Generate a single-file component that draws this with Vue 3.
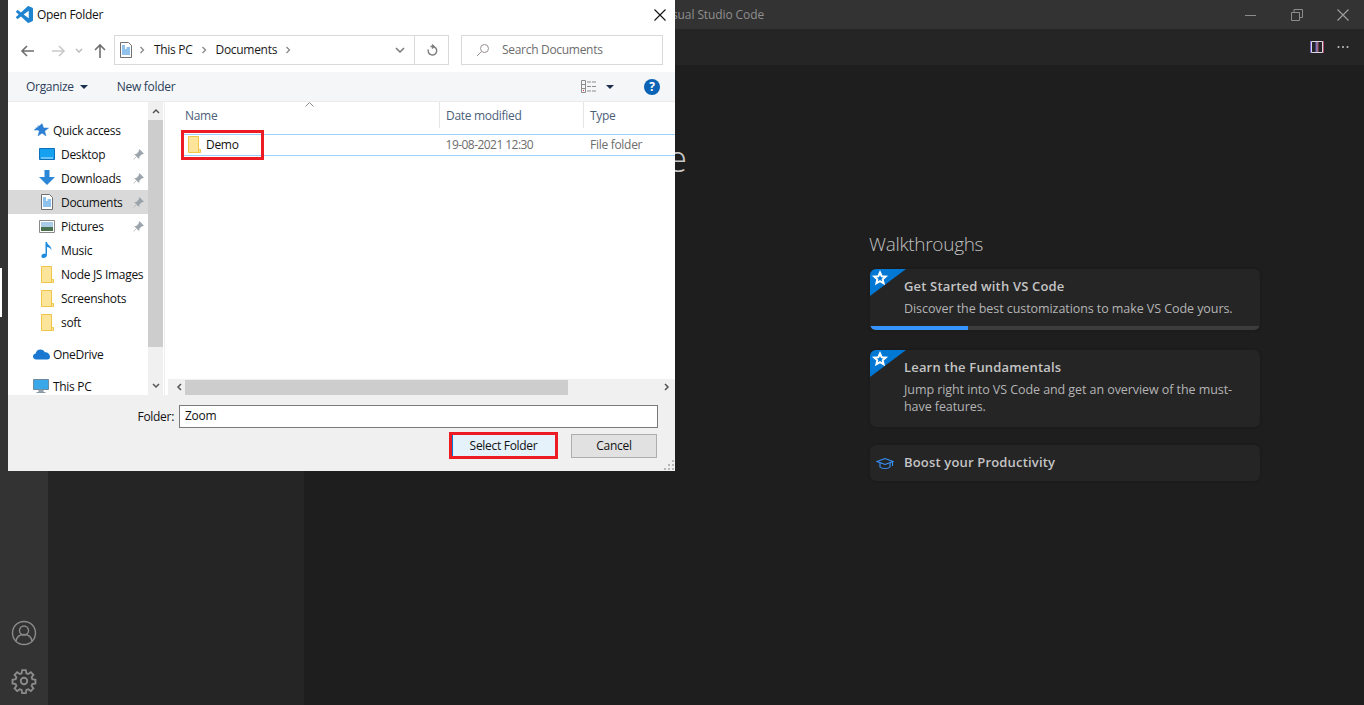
<script setup>
const places = [
  { label: 'Quick access', icon: 'quick', top: true, gap: 0 },
  { label: 'Desktop', icon: 'desktop', pin: true },
  { label: 'Downloads', icon: 'download', pin: true },
  { label: 'Documents', icon: 'doc', pin: true, selected: true },
  { label: 'Pictures', icon: 'picture', pin: true },
  { label: 'Music', icon: 'music' },
  { label: 'Node JS Images', icon: 'folder' },
  { label: 'Screenshots', icon: 'folder' },
  { label: 'soft', icon: 'folder' },
  { label: 'OneDrive', icon: 'cloud', top: true, spaced: true },
  { label: 'This PC', icon: 'pc', top: true, spaced: true },
]
const walkthroughs = [
  { title: 'Get Started with VS Code', desc: 'Discover the best customizations to make VS Code yours.', star: true, progress: 25 },
  { title: 'Learn the Fundamentals', desc: 'Jump right into VS Code and get an overview of the must-have features.', star: true },
  { title: 'Boost your Productivity', cap: true },
]
</script>

<template>
  <div class="app">
    <header class="titlebar">
      <span class="title-text">Visual Studio Code</span>
      <div class="win-controls">
        <svg width="12" height="12" viewBox="0 0 12 12"><path d="M0 6.5h11" stroke="#8c8c8c" fill="none"/></svg>
        <svg width="12" height="12" viewBox="0 0 12 12"><path d="M.5 3.5h8v8h-8zM3 3V.5h8.500v8H9" stroke="#8c8c8c" fill="none"/></svg>
        <svg width="12" height="12" viewBox="0 0 12 12"><path d="M.5.500l11 11M11.500.500l-11 11" stroke="#9c9c9c" stroke-width="1.200" fill="none"/></svg>
      </div>
    </header>
    <div class="main">
      <aside class="activity">
        <div class="activity-active"></div>
        <div class="activity-bottom">
          <svg width="26" height="26" viewBox="0 0 26 26" fill="none" stroke="#8b8b8b" stroke-width="1.400">
            <circle cx="13" cy="13" r="11.500"/>
            <circle cx="13" cy="10.500" r="4.500"/>
            <path d="M5 21c1-5 4-6.500 8-6.500s7 1.500 8 6.500"/>
          </svg>
          <svg width="26" height="26" viewBox="0 0 24 24" fill="none" stroke="#8b8b8b" stroke-width="1.700">
            <path d="M10.300 2h3.400l.5 2.900 1.700.7 2.400-1.700 2.400 2.400-1.700 2.400.7 1.700 2.900.5v3.400l-2.900.5-.7 1.700 1.700 2.400-2.400 2.400-2.400-1.700-1.700.7-.5 2.900h-3.400l-.5-2.900-1.700-.7-2.400 1.700-2.400-2.400 1.700-2.400-.7-1.700-2.900-.5v-3.400l2.900-.5.7-1.700-1.700-2.400 2.400-2.400 2.400 1.700 1.700-.7z"/>
            <circle cx="12" cy="12" r="3"/>
          </svg>
        </div>
      </aside>
      <aside class="sidebar"></aside>
      <main class="editor">
        <div class="tabs">
          <svg width="14" height="14" viewBox="0 0 14 14" fill="none">
            <path d="M1.500 1.500h11v11h-11zM7 1.500v11" stroke="#dcd6e6"/>
            <path d="M.5 1v12M6 2v10" stroke="#7a6cf0" stroke-width=".8"/>
            <path d="M13.500 1v12M8 2v10" stroke="#d0507a" stroke-width=".8"/>
          </svg>
          <svg width="14" height="14" viewBox="0 0 14 14" fill="#c5c5c5"><circle cx="2.500" cy="7" r="1"/><circle cx="7" cy="7" r="1"/><circle cx="11.500" cy="7" r="1"/></svg>
        </div>
        <div class="welcome">
          <div class="welcome-left">
            <h1 class="product">Visual Studio Code</h1>
          </div>
          <section class="welcome-right">
            <h2 class="walk-heading">Walkthroughs</h2>
            <article v-for="w in walkthroughs" :key="w.title" class="walk-card" :class="{ 'has-progress': w.progress, 'is-cap': w.cap }">
              <div v-if="w.star" class="ribbon">
                <svg width="36" height="27" viewBox="0 0 36 27">
                  <path d="M0 2a2 2 0 0 1 2-2h34L0 27z" fill="#0078d4"/>
                  <path d="M10 3.500l1.700 3.700 4 .4-3 2.700.9 4-3.600-2.100-3.600 2.100.9-4-3-2.700 4-.4z" fill="none" stroke="#fff" stroke-width="2"/>
                </svg>
              </div>
              <svg v-if="w.cap" class="cap" width="18" height="14" viewBox="0 0 18 14" fill="none" stroke="#3794ff" stroke-width="1.100">
                <path d="M1 4.500L9 1.500l8 3-8 3z"/><path d="M4 6v4c1.500 2 8.500 2 10 0V6"/><path d="M16.500 5v4"/>
              </svg>
              <h3 class="walk-title">{{ w.title }}</h3>
              <p v-if="w.desc" class="walk-desc">{{ w.desc }}</p>
              <div v-if="w.progress" class="progress"><div class="progress-fill" :style="{ width: w.progress + '%' }"></div></div>
            </article>
          </section>
        </div>
      </main>
    </div>

    <div class="dialog">
      <div class="dlg-title">
        <svg width="17" height="17" viewBox="0 0 24 24"><path fill="#1f84d0" d="M23.150 2.587L18.210.21a1.494 1.494 0 0 0-1.705.29l-9.460 8.630-4.120-3.128a.999.999 0 0 0-1.276.057L.327 7.261A1 1 0 0 0 .326 8.740L3.899 12 .326 15.260a1 1 0 0 0 .001 1.479L1.650 17.940a.999.999 0 0 0 1.276.057l4.120-3.128 9.460 8.630a1.492 1.492 0 0 0 1.704.29l4.942-2.377A1.500 1.500 0 0 0 24 20.060V3.939a1.500 1.500 0 0 0-.850-1.352zm-5.146 14.861L10.826 12l7.178-5.448v10.896z"/></svg>
        <span class="dlg-title-text">Open Folder</span>
        <svg class="dlg-close" width="12" height="12" viewBox="0 0 12 12"><path d="M.5.500l11 11M11.500.500l-11 11" stroke="#111" stroke-width="1.100" fill="none"/></svg>
      </div>

      <div class="dlg-nav">
        <svg class="nav-ico" width="16" height="14" viewBox="0 0 16 14" fill="none" stroke="#6e6e6e" stroke-width="1.600"><path d="M14 7H2M7 2L2 7l5 5"/></svg>
        <svg class="nav-ico fwd" width="16" height="14" viewBox="0 0 16 14" fill="none" stroke="#c9c9c9" stroke-width="1.600"><path d="M2 7h12M9 2l5 5-5 5"/></svg>
        <svg class="nav-ico drop" width="8" height="6" viewBox="0 0 8 6" fill="none" stroke="#b5b5b5" stroke-width="1.300"><path d="M1 1l3 3 3-3"/></svg>
        <svg class="nav-ico up" width="14" height="16" viewBox="0 0 14 16" fill="none" stroke="#6e6e6e" stroke-width="1.600"><path d="M7 15V2M2 7l5-5 5 5"/></svg>
        <div class="address">
          <svg class="addr-doc" width="12" height="16" viewBox="0 0 12 16">
            <path d="M.5.500h8l3 3v12H.5z" fill="#fff" stroke="#6f6f6f"/>
            <path d="M2 4h3M2 6h3M6.500 6h3.500M2 8h8M2 10h8M2 12h8" stroke="#1f86dc"/>
          </svg>
          <svg class="chev" width="6" height="8" viewBox="0 0 6 8" fill="none" stroke="#888" stroke-width="1.300"><path d="M1.500 1l3 3-3 3"/></svg>
          <span class="crumb">This PC</span>
          <svg class="chev" width="6" height="8" viewBox="0 0 6 8" fill="none" stroke="#888" stroke-width="1.300"><path d="M1.500 1l3 3-3 3"/></svg>
          <span class="crumb">Documents</span>
          <svg class="chev" width="6" height="8" viewBox="0 0 6 8" fill="none" stroke="#888" stroke-width="1.300"><path d="M1.500 1l3 3-3 3"/></svg>
          <svg class="addr-drop" width="10" height="6" viewBox="0 0 10 6" fill="none" stroke="#7a7a7a" stroke-width="1.500"><path d="M1 1l4 4 4-4"/></svg>
          <div class="addr-refresh">
            <svg width="12" height="13" viewBox="0 0 12 13" fill="none" stroke="#7a7a7a" stroke-width="1.400"><path d="M4.500 2.500h2.500a4.300 4.300 0 1 1-4.700 3"/><path d="M6 .5l2 2-2 2"/></svg>
          </div>
        </div>
        <div class="search">
          <svg width="14" height="14" viewBox="0 0 14 14" fill="none" stroke="#9a8f8f"><circle cx="8.500" cy="5.500" r="4"/><path d="M5.500 8.500L1 13"/></svg>
          <span class="search-text">Search Documents</span>
        </div>
      </div>

      <div class="dlg-tools">
        <span class="tool">Organize</span>
        <span class="tool-arrow"></span>
        <span class="tool new">New folder</span>
        <svg class="views" width="16" height="13" viewBox="0 0 16 13" fill="none">
          <path d="M.5.500h4v12h-4zM.5 4.500h4M.5 8.500h4" stroke="#8d8d8d"/>
          <path d="M6 2h9.500M6 6.500h9.500M6 11h9.500" stroke="#8d8d8d" stroke-dasharray="4 1"/>
          <path d="M2 10h1v1H2z" fill="#d33"/>
        </svg>
        <span class="tool-arrow views-arrow"></span>
        <span class="help">?</span>
      </div>

      <div class="dlg-body">
        <div class="tree">
          <div class="tree-list">
            <div v-for="p in places" :key="p.label" class="place" :class="{ selected: p.selected, top: p.top, spaced: p.spaced }">
              <span class="place-ico">
                <svg v-if="p.icon === 'quick'" width="16" height="15" viewBox="0 0 16 15"><path d="M9 .5l1.600 4.400 4.900.2-3.800 3 1.300 4.800-4-2.800-4 2.800 1.300-4.800L5 7H1M4 5H2M4 3h2" fill="#2d7fd3" stroke="#2d7fd3" stroke-width=".5"/></svg>
                <svg v-else-if="p.icon === 'desktop'" width="16" height="14" viewBox="0 0 16 14"><path d="M.5 1.500h15v11H.5z" fill="#15a0f0" stroke="#0d6fb8"/><path d="M2 11h12" stroke="#bfe7ff"/></svg>
                <svg v-else-if="p.icon === 'download'" width="16" height="16" viewBox="0 0 16 16"><path d="M5.500 0h5v7H16l-8 8-8-8h5.500z" fill="#2c86d8"/></svg>
                <svg v-else-if="p.icon === 'doc'" width="12" height="16" viewBox="0 0 12 16"><path d="M.5.500h8l3 3v12H.5z" fill="#fff" stroke="#6f6f6f"/><path d="M2 4h3M2 6h3M6.500 6h3.500M2 8h8M2 10h8M2 12h8" stroke="#1f86dc"/></svg>
                <svg v-else-if="p.icon === 'picture'" width="16" height="13" viewBox="0 0 16 13"><path d="M.5.500h15v12H.5z" fill="#fff" stroke="#8a8a8a"/><path d="M2 2h12v5H2z" fill="#a9cbe6"/><path d="M2 7h12v4H2z" fill="#49714f"/></svg>
                <svg v-else-if="p.icon === 'music'" width="12" height="16" viewBox="0 0 12 16"><path d="M4.500 0h1.500c.3 3 4.500 3.500 4.500 8-1-2-3-3-4.500-3v8c0 2-2 3-3.500 3S0 15 .5 13.500 3 11.500 4.500 12z" fill="#1c8be0"/></svg>
                <svg v-else-if="p.icon === 'folder'" width="13" height="17" viewBox="0 0 13 17"><path d="M.5.500h10v13h2v3H.5z" fill="#fde49b" stroke="#efc54a"/><path d="M10.500 13v3.500" stroke="#efc54a"/></svg>
                <svg v-else-if="p.icon === 'cloud'" width="17" height="11" viewBox="0 0 17 11"><path d="M3.500 10.500C1 10.500 0 9 0 7.500 0 6 1 5 2.500 4.800 3 2 5 .5 7.500.5c2 0 3.500 1 4.300 2.700C14.500 3 17 5 17 8c0 1.500-1 2.500-2.500 2.500z" fill="#1b78d0"/></svg>
                <svg v-else-if="p.icon === 'pc'" width="16" height="15" viewBox="0 0 16 15"><path d="M.5.500h15v10H.5z" fill="#3aa7e8" stroke="#6c8aa0"/><path d="M6 11h4v2H6zM3.500 13.500h9" fill="#9ab" stroke="#8a9aa5"/></svg>
              </span>
              <span class="place-label">{{ p.label }}</span>
              <svg v-if="p.pin" class="pin" width="11" height="11" viewBox="0 0 11 11"><path d="M6.500.5l4 4-2 .7-2.300 2.300-.4 2-4-4 2-.4L6 2.500zM3 8L.5 10.500" fill="#9ba3aa" stroke="#9ba3aa" stroke-width=".6"/></svg>
            </div>
          </div>
          <div class="vscroll">
            <svg class="sb-arrow" width="8" height="6" viewBox="0 0 8 6" fill="none" stroke="#555" stroke-width="1.500"><path d="M1 5l3-3 3 3"/></svg>
            <div class="vthumb"></div>
            <svg class="sb-arrow" width="8" height="6" viewBox="0 0 8 6" fill="none" stroke="#555" stroke-width="1.500"><path d="M1 1l3 3 3-3"/></svg>
          </div>
        </div>
        <div class="files">
          <div class="file-head">
            <span class="col col-name">Name</span>
            <svg class="sort" width="9" height="5" viewBox="0 0 9 5" fill="none" stroke="#8a8a8a"><path d="M.5 4.500l4-4 4 4"/></svg>
            <span class="col col-date">Date modified</span>
            <span class="col col-type">Type</span>
          </div>
          <div class="file-row">
            <svg class="file-ico" width="13" height="17" viewBox="0 0 13 17"><path d="M.5.500h10v13h2v3H.5z" fill="#fde49b" stroke="#efc54a"/><path d="M10.500 13v3.500" stroke="#efc54a"/></svg>
            <span class="file-name">Demo</span>
            <span class="file-date">19-08-2021 12:30</span>
            <span class="file-type">File folder</span>
            <div class="red-box"></div>
          </div>
          <div class="file-space"></div>
          <div class="hscroll">
            <svg width="6" height="8" viewBox="0 0 6 8" fill="none" stroke="#555" stroke-width="1.500"><path d="M5 1L2 4l3 3"/></svg>
            <div class="hthumb"></div>
            <svg width="6" height="8" viewBox="0 0 6 8" fill="none" stroke="#555" stroke-width="1.500"><path d="M1 1l3 3-3 3"/></svg>
          </div>
        </div>
      </div>

      <div class="dlg-foot">
        <div class="foot-field">
          <label class="foot-label">Folder:</label>
          <div class="foot-input">Zoom</div>
        </div>
        <div class="foot-buttons">
          <button class="btn btn-primary">Select Folder</button>
          <button class="btn">Cancel</button>
        </div>
        <svg class="grip" width="11" height="11" viewBox="0 0 11 11" fill="#b8b8b8"><path d="M8 0h2v2H8zM4 4h2v2H4zM8 4h2v2H8zM0 8h2v2H0zM4 8h2v2H4zM8 8h2v2H8z"/></svg>
      </div>
    </div>
  </div>
</template>

<style>
html, body { margin: 0; background: #1e1e1e; overflow: hidden; }
</style>

<style scoped>
* { box-sizing: border-box; }
.app {
  position: relative;
  width: 1364px;
  height: 705px;
  overflow: hidden;
  display: flex;
  flex-direction: column;
  font-family: "Open Sans", "Noto Sans", sans-serif;
  background: #1e1e1e;
}
.titlebar {
  height: 29px;
  flex: none;
  background: #333333;
  display: flex;
  align-items: center;
  padding-left: 662px;
  color: #8f8f8f;
  font-size: 12px;
}
.title-text { letter-spacing: -0.1px; }
.win-controls {
  margin-left: auto;
  display: flex;
  gap: 34px;
  padding-right: 15px;
}
.main { flex: 1; display: flex; min-height: 0; }
.activity {
  width: 48px;
  background: #333333;
  display: flex;
  flex-direction: column;
  padding-top: 239px;
}
.activity-active { width: 2px; height: 49px; background: #fff; }
.activity-bottom {
  margin-top: auto;
  display: flex;
  flex-direction: column;
  align-items: center;
  gap: 22px;
  padding-bottom: 11px;
}
.sidebar { width: 256px; background: #252526; }
.editor { flex: 1; display: flex; flex-direction: column; min-width: 0; }
.tabs {
  height: 36px;
  background: #252526;
  display: flex;
  justify-content: flex-end;
  align-items: center;
  gap: 12px;
  padding-right: 14px;
}
.welcome { display: flex; flex: 1; padding-top: 70px; }
.welcome-left { width: 383px; display: flex; justify-content: flex-end; flex: none; }
.product {
  margin: 0;
  font-size: 36px;
  font-weight: 300;
  line-height: 48px;
  height: 48px;
  color: #c8c8c8;
  white-space: nowrap;
}
.welcome-right { margin-left: 182px; width: 391px; padding-top: 96px; }
.walk-heading {
  margin: 0 0 11px;
  font-size: 19px;
  font-weight: 300;
  line-height: 26px;
  height: 27px;
  color: #c0c0c0;
  letter-spacing: -0.3px;
}
.walk-card {
  position: relative;
  margin: 0 0 18px 1px;
  width: 390px;
  background: #252526;
  border-radius: 6px;
  padding: 6px 16px 6px 34px;
  overflow: hidden;
  min-height: 77px;
  box-shadow: 0 0 3px rgba(0,0,0,.25);
}
.walk-card.has-progress { min-height: 61px; margin-bottom: 20px; }
.walk-card.is-cap { min-height: 36px; }
.ribbon { position: absolute; left: 0; top: 0; line-height: 0; }
.cap { position: absolute; left: 6px; top: 12px; }
.walk-title {
  margin: 0;
  font-size: 13px;
  font-weight: 600;
  line-height: 22px;
  color: #c4c4c4;
  letter-spacing: 0.17px;
}
.walk-desc {
  margin: 3px 0 0;
  font-size: 12.5px;
  line-height: 17px;
  color: #b4b4b4;
  letter-spacing: -0.07px;
}
.progress {
  position: absolute;
  left: 0;
  right: 0;
  bottom: 0;
  height: 4px;
  background: #3c3c3c;
}
.progress-fill { height: 100%; background: #3794ff; }

.dialog {
  position: absolute;
  left: 8px;
  top: 0;
  width: 667px;
  height: 471px;
  background: #fff;
  display: flex;
  flex-direction: column;
  font-size: 12px;
  color: #000;
  letter-spacing: -0.3px;
}
.dlg-title {
  height: 29px;
  flex: none;
  display: flex;
  align-items: center;
  padding-left: 8px;
}
.dlg-title-text { margin-left: 4px; color: #111; }
.dlg-close { margin-left: auto; margin-right: 9px; }
.dlg-nav {
  height: 43px;
  flex: none;
  display: flex;
  align-items: center;
  padding: 0 12px 0 12px;
  position: relative;
}
.nav-ico { flex: none; }
.fwd { margin-left: 14px; }
.drop { margin-left: 9px; }
.up { margin-left: 10px; }
.address {
  margin-left: 7px;
  width: 335px;
  height: 30px;
  margin-top: -1px;
  border: 1px solid #d9d9d9;
  display: flex;
  align-items: center;
  padding-left: 5px;
  flex: none;
}
.addr-doc { flex: none; margin-right: 6px; }
.chev { flex: none; margin: 0 9px 0 1px; }
.crumb { margin-right: 7px; white-space: nowrap; color: #1a1a1a; padding-bottom: 2px; }
.addr-drop { margin-left: auto; margin-right: 9px; }
.addr-refresh {
  width: 34px;
  height: 100%;
  border-left: 1px solid #d9d9d9;
  display: flex;
  align-items: center;
  justify-content: center;
}
.search {
  margin-left: 12px;
  width: 202px;
  height: 30px;
  margin-top: -1px;
  border: 1px solid #d9d9d9;
  display: flex;
  align-items: center;
  padding-left: 14px;
  gap: 12px;
  color: #6d6d6d;
  flex: none;
}
.search-text { padding-bottom: 2px; }
.dlg-tools {
  height: 30px;
  flex: none;
  background: #f5f6f7;
  display: flex;
  align-items: center;
  padding-left: 18px;
  color: #2b3f5c;
  border-bottom: 1px solid #ebebeb;
}
.tool { white-space: nowrap; }
.tool-arrow {
  width: 0;
  height: 0;
  border-left: 4px solid transparent;
  border-right: 4px solid transparent;
  border-top: 4px solid #1c2f4d;
  margin-left: 6px;
}
.tool.new { margin-left: 29px; }
.views { margin-left: auto; }
.views-arrow { margin-left: 9px; }
.help {
  margin: 0 15px 0 30px;
  width: 16px;
  height: 16px;
  border-radius: 50%;
  background: #0a63b4;
  color: #fff;
  font-weight: 700;
  font-size: 12px;
  line-height: 16px;
  text-align: center;
}
.dlg-body { flex: none; height: 293px; display: flex; }
.tree { width: 155px; flex: none; display: flex; }
.tree-list { width: 140px; flex: none; padding-top: 16px; overflow: hidden; }
.place {
  position: relative;
  height: 24px;
  display: flex;
  align-items: center;
  padding-left: 25px;
  white-space: nowrap;
  color: #111;
}
.place.selected { background: #d9d9d9; }
.place.top { padding-left: 21px; }
.place.spaced { margin-top: 8px; }
.place-ico { width: 28px; flex: none; display: flex; justify-content: center; }
.place.top .place-ico { width: 24px; }
.place-label { flex: none; }
.pin { position: absolute; left: 125px; top: 7px; }
.vscroll {
  width: 15px;
  background: #f0f0f0;
  display: flex;
  flex-direction: column;
  align-items: center;
  padding: 6px 0;
}
.vthumb { width: 15px; height: 227px; background: #cdcdcd; margin-top: 6px; }
.sb-arrow { flex: none; }
.vscroll .sb-arrow:last-child { margin-top: auto; }
.files {
  flex: 1;
  margin-left: 1px;
  border-left: 1px solid #efefef;
  display: flex;
  flex-direction: column;
  min-width: 0;
}
.file-head {
  position: relative;
  height: 32px;
  flex: none;
  color: #4c607a;
  line-height: 28px;
}
.col { position: absolute; top: 0; height: 26px; }
.col-name { left: 20px; }
.col-date { left: 274px; width: 144px; padding-left: 6px; border-left: 1px solid #e5e5e5; }
.col-type { left: 418px; padding-left: 6px; border-left: 1px solid #e5e5e5; }
.sort { position: absolute; left: 140px; top: 0; }
.file-row {
  position: relative;
  height: 22px;
  margin-left: 18px;
  flex: none;
  border: 1px solid #99d1ff;
  border-right: 0;
  display: flex;
  align-items: center;
  color: #6d6d6d;
  padding-bottom: 1px;
}
.file-ico { margin-left: 4px; flex: none; }
.file-name { margin-left: 5px; margin-right: 207px; flex: none; color: #111; }
.file-date { flex: none; margin-right: 57px; letter-spacing: -0.55px; }
.file-type { flex: none; }
.red-box {
  position: absolute;
  left: -3px;
  top: -5px;
  width: 83px;
  height: 30px;
  border: 3px solid #ed1c24;
}
.file-space { flex: 1; }
.hscroll {
  height: 16px;
  flex: none;
  background: #f0f0f0;
  display: flex;
  align-items: center;
  padding: 0 5px 0 8px;
  margin-left: 3px;
}
.hthumb { width: 383px; height: 15px; background: #cdcdcd; margin-left: 3px; margin-right: auto; }
.dlg-foot {
  position: relative;
  flex: 1;
  background: #f0f0f0;
  padding: 10px 17px 0 0;
}
.foot-field { display: flex; align-items: center; justify-content: flex-end; }
.foot-label { margin-right: 5px; color: #111; }
.foot-input {
  width: 479px;
  height: 23px;
  background: #fff;
  border: 1px solid #7a7a7a;
  padding-left: 5px;
  line-height: 20px;
  color: #111;
}
.foot-buttons {
  display: flex;
  justify-content: flex-end;
  align-items: center;
  gap: 13px;
  margin-top: 4px;
  padding-right: 1px;
}
.btn {
  width: 86px;
  height: 24px;
  background: #e1e1e1;
  border: 1px solid #adadad;
  font: inherit;
  letter-spacing: inherit;
  color: #111;
  padding: 0;
}
.btn-primary {
  width: 109px;
  height: 27px;
  background: #e5f1fb;
  border: 3px solid #ed1c24;
  box-shadow: inset 1px 0 0 #0078d7;
}
.grip { position: absolute; right: 0; bottom: 0; }
</style>
